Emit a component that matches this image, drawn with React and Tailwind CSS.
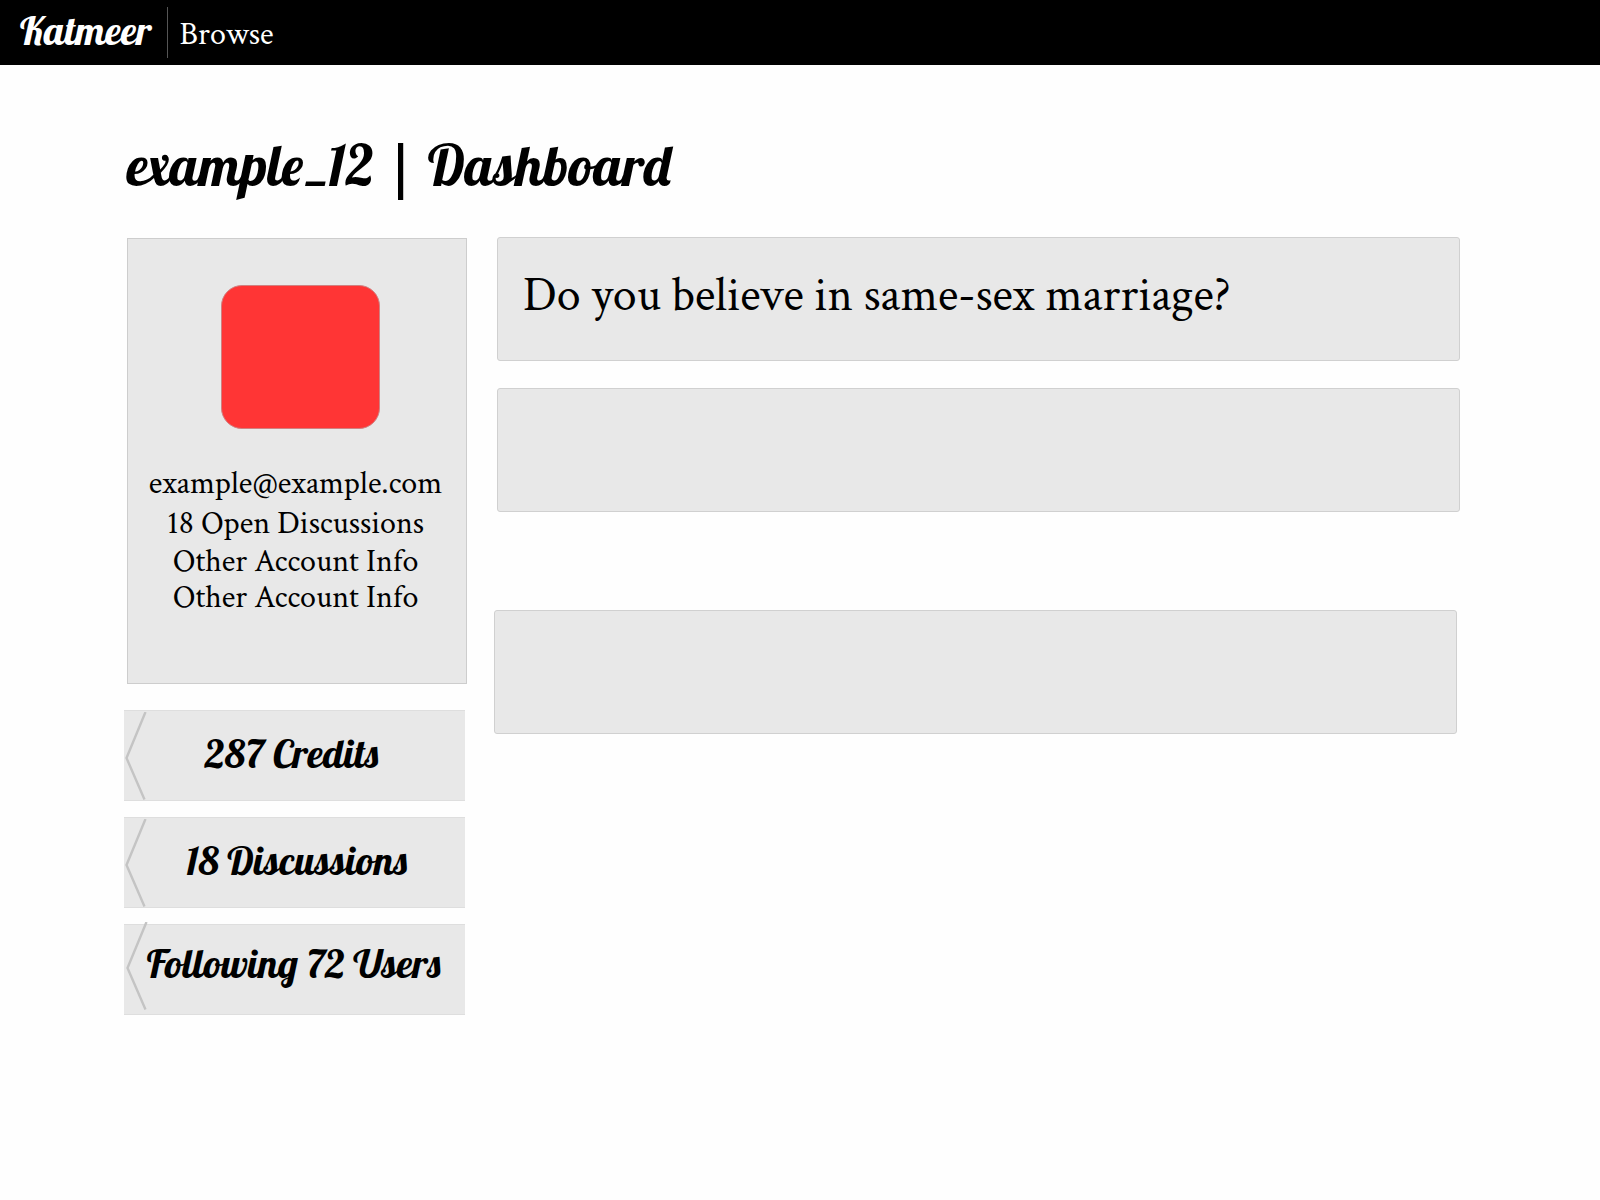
const script = 'font-["Lobster","Liberation_Serif",serif] font-normal';

const accountLines = [
  { text: "example@example.com", line: "leading-10" },
  { text: "18 Open Discussions", line: "leading-10" },
  { text: "Other Account Info", line: "leading-9" },
  { text: "Other Account Info", line: "leading-9" },
];

const stats = [
  { text: "287 Credits", pad: "pb-1.5 pr-1.5", arrow: "top-px left-0" },
  { text: "18 Discussions", pad: "pb-1.5 pl-1", arrow: "top-px left-0" },
  { text: "Following 72 Users", pad: "pb-3.5 pr-0.5", arrow: "-top-[3px] left-px" },
];

function Header() {
  return (
    <header className="flex h-[65px] items-center bg-black pl-5 text-white">
      <a href="#home" className={`${script} pb-1.5 text-[40px] leading-[50px]`}>
        Katmeer
      </a>
      <nav className="ml-[15px] flex h-[51px] items-center border-l border-[#555] pt-1 pl-3">
        <a href="#browse" className="text-[32px] leading-[50px]">
          Browse
        </a>
      </nav>
    </header>
  );
}

function Profile() {
  return (
    <section className="mt-px ml-[3px] border border-[#cdcdcd] bg-[#e8e8e8] pt-[46px] pb-[67px]">
      <div className="ml-[93px] h-[144px] w-[159px] rounded-[21px] border border-[#d08080] bg-[#ff3535]" />
      <ul className="mt-[35px] pr-[3px] text-center text-[32px]">
        {accountLines.map((item, i) => (
          <li key={i} className={item.line}>
            {item.text}
          </li>
        ))}
      </ul>
    </section>
  );
}

function Stat({ text, pad, arrow }) {
  return (
    <a
      href="#stats"
      className={`${script} ${pad} relative flex h-[91px] items-center justify-center border-y border-[#dedede] bg-[#e8e8e8] text-[40px] leading-[48px] whitespace-nowrap`}
    >
      <svg
        className={`absolute ${arrow}`}
        width="24"
        height="88"
        viewBox="0 0 24 88"
        fill="none"
        stroke="#c4c4c4"
        strokeWidth="2.4"
        aria-hidden="true"
      >
        <path d="M21.500 0L2.500 46L20.500 87.500" />
      </svg>
      {text}
    </a>
  );
}

function Card({ children, className }) {
  return (
    <article
      className={`min-h-[124px] rounded-[3px] border border-[#d0d0d0] bg-[#e8e8e8] ${className}`}
    >
      {children}
    </article>
  );
}

export default function App() {
  return (
    <div className='min-h-screen bg-[#fefefe] font-["Crimson_Text","Liberation_Serif",serif] text-black'>
      <Header />
      <main className="pt-[70px] pr-[140px] pb-16 pl-[124px]">
        <h1 className={`${script} pl-[3px] text-[56px] leading-[60px]`}>example_12 | Dashboard</h1>
        <div className="mt-[42px] grid grid-cols-[343px_1fr] items-start gap-x-[27px]">
          <aside>
            <Profile />
            <div className="mt-[26px] mr-[2px] flex flex-col gap-4">
              {stats.map((s) => (
                <Stat key={s.text} {...s} />
              ))}
            </div>
          </aside>
          <div className="flex flex-col">
            <Card className="ml-[3px] pt-7 pl-[25px]">
              <h2 className="text-[48px] leading-[60px]">Do you believe in same-sex marriage?</h2>
            </Card>
            <Card className="mt-[27px] ml-[3px]" />
            <Card className="mt-[98px] mr-[3px]" />
          </div>
        </div>
      </main>
    </div>
  );
}
